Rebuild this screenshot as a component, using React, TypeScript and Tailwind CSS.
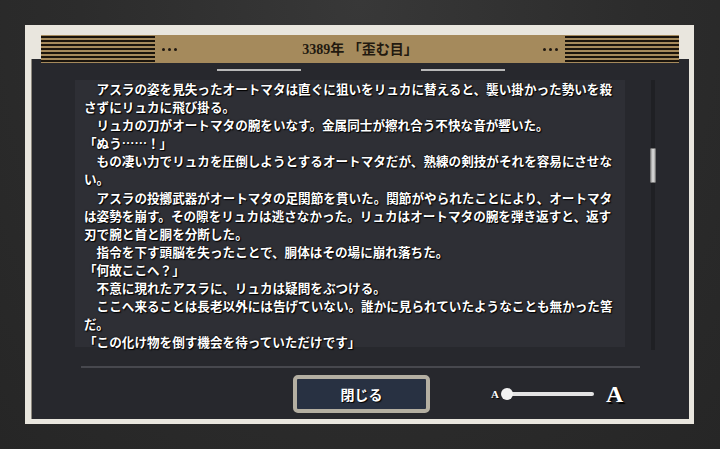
const lines = [
  "　アスラの姿を見失ったオートマタは直ぐに狙いをリュカに替えると、襲い掛かった勢いを殺",
  "さずにリュカに飛び掛る。",
  "　リュカの刀がオートマタの腕をいなす。金属同士が擦れ合う不快な音が響いた。",
  "「ぬう……！」",
  "　もの凄い力でリュカを圧倒しようとするオートマタだが、熟練の剣技がそれを容易にさせな",
  "い。",
  "　アスラの投擲武器がオートマタの足関節を貫いた。関節がやられたことにより、オートマタ",
  "は姿勢を崩す。その隙をリュカは逃さなかった。リュカはオートマタの腕を弾き返すと、返す",
  "刃で腕と首と胴を分断した。",
  "　指令を下す頭脳を失ったことで、胴体はその場に崩れ落ちた。",
  "「何故ここへ？」",
  "　不意に現れたアスラに、リュカは疑問をぶつける。",
  "　ここへ来ることは長老以外には告げていない。誰かに見られていたようなことも無かった筈",
  "だ。",
  "「この化け物を倒す機会を待っていただけです」",
];

const serif = "font-['Liberation_Serif','Noto_Sans_CJK_JP',serif]";
const jp = "font-['Noto_Sans_CJK_JP',sans-serif]";

function Stripes() {
  return (
    <div className="flex h-full w-[114px] flex-col justify-between py-[1px]">
      {[0, 1, 2, 3, 4, 5, 6].map((i) => (
        <div key={i} className="h-[2px] bg-[#1a140c]" />
      ))}
    </div>
  );
}

function Dots() {
  return (
    <div className="flex gap-[3px]">
      <span className="h-[3px] w-[3px] rounded-full bg-[#1f1810]" />
      <span className="h-[3px] w-[3px] rounded-full bg-[#1f1810]" />
      <span className="h-[3px] w-[3px] rounded-full bg-[#1f1810]" />
    </div>
  );
}

export default function App() {
  return (
    <div className="h-[449px] w-[720px] overflow-hidden bg-[radial-gradient(ellipse_at_50%_0%,#383838_0%,#2c2c2c_55%,#262626_100%)] pl-[25px] pt-[25px]">
      <div className="flex h-[399px] w-[669px] flex-col bg-[#e9e6de] pt-[10px]">
        {/* title bar */}
        <div className="relative z-10 ml-[16px] flex h-[28px] w-[638px] items-center bg-[#a58a5c]">
          <Stripes />
          <div className="ml-[7px]">
            <Dots />
          </div>
          <div
            className={`flex-1 text-center text-[14px] font-bold text-[#22190f] ${serif}`}
          >
            3389年 「歪む目」
          </div>
          <div className="mr-[7px]">
            <Dots />
          </div>
          <Stripes />
        </div>

        {/* dark panel */}
        <div className="-mt-[4px] ml-[6px] flex h-[360px] w-[658px] flex-col border-l border-[#8d887e] bg-[#27282d]">
          <div className="flex h-[21px] items-end justify-center gap-[120px] pb-[9px]">
            <div className="h-[2px] w-[84px] bg-[#b8b8b8]" />
            <div className="h-[2px] w-[84px] bg-[#b8b8b8]" />
          </div>

          <div className="flex h-[270px] pl-[43px]">
            <div
              className={`h-[267px] w-[550px] bg-[#2e2f35] pl-[9px] text-[12.6px] font-bold leading-[18.1px] text-white [text-shadow:1px_1px_1px_#000,0_0_2px_#000] ${jp}`}
            >
              {lines.map((t, i) => (
                <div key={i} className="whitespace-pre">
                  {t}
                </div>
              ))}
            </div>
            <div className="relative ml-[26px] h-[270px] w-[4px] bg-[#1f2024]">
              <div className="absolute left-[-1px] top-[68px] h-[35px] w-[6px] rounded-[1px] border border-[#777] bg-[linear-gradient(90deg,#9a9a9a,#e0e0e0_50%,#a8a8a8)]" />
            </div>
          </div>

          <div className="ml-[49px] mt-[16px] h-[2px] w-[559px] bg-[#47484e]" />

          <div className="mt-[7px] flex items-center">
            <button className={`ml-[261px] flex h-[38px] w-[137px] items-center justify-center rounded-[5px] border-[4px] border-[#b4afa2] bg-[#283142] text-[14px] font-bold text-white [text-shadow:1px_1px_1px_#000] ${jp}`}>
              閉じる
            </button>
            <div className={`ml-[61px] flex items-center ${serif}`}>
              <span className="text-[11px] font-bold leading-none text-white [text-shadow:1px_1px_1px_#000]">
                A
              </span>
              <div className="relative ml-[2px] flex h-[12px] w-[100px] items-center">
                <div className="ml-[6px] h-[4px] w-[87px] rounded-full bg-[#e3e3e3]" />
                <div className="absolute left-0 top-0 h-[12px] w-[12px] rounded-full bg-[#f2f2f2]" />
              </div>
              <span className="ml-[5px] text-[24px] font-bold leading-none text-white [text-shadow:2px_2px_1px_#000]">
                A
              </span>
            </div>
          </div>
        </div>
      </div>
    </div>
  );
}
